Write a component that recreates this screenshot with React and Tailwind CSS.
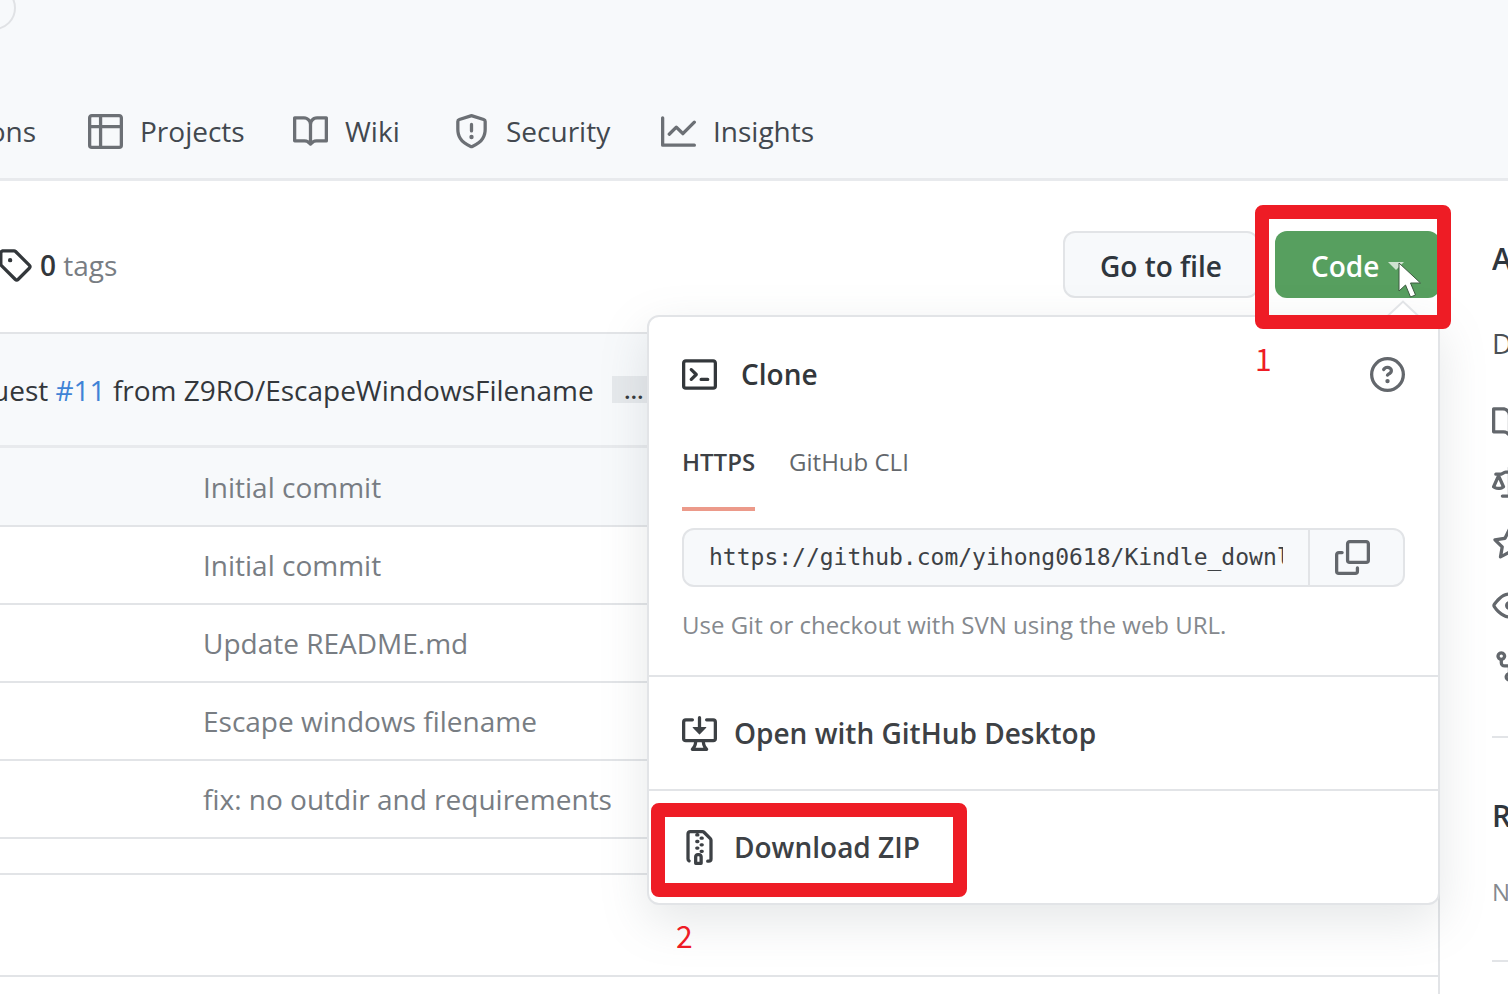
const ICONS = {
  table: "M0 1.75C0 .784.784 0 1.75 0h12.5C15.216 0 16 .784 16 1.75v12.5A1.75 1.75 0 0 1 14.25 16H1.75A1.75 1.75 0 0 1 0 14.25ZM6.5 6.5v8h7.75a.25.25 0 0 0 .25-.25V6.5Zm8-1.5V1.75a.25.25 0 0 0-.25-.25H6.5V5Zm-13 1.5v7.75c0 .138.112.25.25.25H5v-8ZM5 5V1.5H1.75a.25.25 0 0 0-.25.25V5Z",
  book: "M0 1.75A.75.75 0 0 1 .75 1h4.253c1.227 0 2.317.59 3 1.501A3.743 3.743 0 0 1 11.006 1h4.245a.75.75 0 0 1 .75.75v10.5a.75.75 0 0 1-.75.75h-4.507a2.25 2.25 0 0 0-1.591.659l-.622.621a.75.75 0 0 1-1.06 0l-.622-.621A2.25 2.25 0 0 0 5.258 13H.75a.75.75 0 0 1-.75-.75Zm7.251 10.324.004-5.073-.002-2.253A2.25 2.25 0 0 0 5.003 2.5H1.5v9h3.757a3.75 3.75 0 0 1 1.994.574ZM8.755 4.75l-.004 7.322a3.752 3.752 0 0 1 1.992-.572H14.5v-9h-3.495a2.25 2.25 0 0 0-2.25 2.25Z",
  shield: "M7.467.133a1.75 1.75 0 0 1 1.066 0l5.25 1.68A1.75 1.75 0 0 1 15 3.48V7c0 1.566-.32 3.182-1.303 4.682-.983 1.498-2.585 2.813-5.032 3.855a1.7 1.7 0 0 1-1.33 0c-2.447-1.042-4.049-2.357-5.032-3.855C1.32 10.182 1 8.566 1 7V3.48a1.75 1.75 0 0 1 1.217-1.667Zm.61 1.429a.25.25 0 0 0-.153 0l-5.25 1.68a.25.25 0 0 0-.174.238V7c0 1.358.275 2.666 1.057 3.86.784 1.194 2.121 2.34 4.366 3.297a.2.2 0 0 0 .154 0c2.245-.956 3.582-2.104 4.366-3.298C13.225 9.666 13.5 8.36 13.5 7V3.48a.25.25 0 0 0-.174-.237ZM9 10.5a1 1 0 1 1-2 0 1 1 0 0 1 2 0Zm-.25-5.75a.75.75 0 0 0-1.5 0v3a.75.75 0 0 0 1.5 0Z",
  graph: "M1.5 1.75V13.5h13.75a.75.75 0 0 1 0 1.5H.75a.75.75 0 0 1-.75-.75V1.75a.75.75 0 0 1 1.5 0Zm14.28 2.53-5.25 5.25a.75.75 0 0 1-1.06 0L7 7.06 4.28 9.78a.751.751 0 0 1-1.042-.018.751.751 0 0 1-.018-1.042l3.25-3.25a.75.75 0 0 1 1.06 0L10 7.94l4.72-4.72a.751.751 0 0 1 1.042.018.751.751 0 0 1 .018 1.042Z",
  tag: "M1 7.775V2.75C1 1.784 1.784 1 2.75 1h5.025c.464 0 .91.184 1.238.513l6.25 6.25a1.75 1.75 0 0 1 0 2.474l-5.026 5.026a1.75 1.75 0 0 1-2.474 0l-6.25-6.25A1.752 1.752 0 0 1 1 7.775Zm1.5 0c0 .066.026.13.073.177l6.25 6.25a.25.25 0 0 0 .354 0l5.025-5.025a.25.25 0 0 0 0-.354l-6.25-6.25a.25.25 0 0 0-.177-.073H2.75a.25.25 0 0 0-.25.25ZM6 5a1 1 0 1 1 0 2 1 1 0 0 1 0-2Z",
  terminal: "M0 2.75C0 1.784.784 1 1.75 1h12.5c.966 0 1.75.784 1.75 1.75v10.5A1.75 1.75 0 0 1 14.25 15H1.75A1.75 1.75 0 0 1 0 13.25Zm1.75-.25a.25.25 0 0 0-.25.25v10.5c0 .138.112.25.25.25h12.5a.25.25 0 0 0 .25-.25V2.75a.25.25 0 0 0-.25-.25ZM7.25 8a.749.749 0 0 1-.22.53l-2.25 2.25a.749.749 0 0 1-1.275-.326.749.749 0 0 1 .215-.734L5.44 8 3.72 6.28a.749.749 0 0 1 .326-1.275.749.749 0 0 1 .734.215l2.25 2.25c.141.14.22.331.22.53Zm1.5 1.5h3a.75.75 0 0 1 0 1.5h-3a.75.75 0 0 1 0-1.5Z",
  question: "M0 8a8 8 0 1 1 16 0A8 8 0 0 1 0 8Zm8-6.5a6.5 6.5 0 1 0 0 13 6.5 6.5 0 0 0 0-13ZM6.92 6.085h.001a.749.749 0 1 1-1.342-.67c.169-.339.436-.701.849-.977C6.845 4.16 7.369 4 8 4a2.756 2.756 0 0 1 1.637.525c.503.377.863.965.863 1.725 0 .448-.115.83-.329 1.15-.205.307-.47.513-.692.662-.109.072-.22.138-.313.195l-.006.004a6.24 6.24 0 0 0-.26.16.952.952 0 0 0-.276.245.75.75 0 0 1-1.248-.832c.184-.264.42-.489.692-.661.103-.067.207-.132.313-.195l.007-.004c.1-.061.182-.11.258-.161a.969.969 0 0 0 .277-.245C8.96 6.514 9 6.427 9 6.25a.612.612 0 0 0-.262-.525A1.27 1.27 0 0 0 8 5.5c-.369 0-.595.09-.74.187a1.01 1.01 0 0 0-.34.398ZM9 11a1 1 0 1 1-2 0 1 1 0 0 1 2 0Z",
  copy: "M0 6.75C0 5.784.784 5 1.75 5h1.5a.75.75 0 0 1 0 1.5h-1.5a.25.25 0 0 0-.25.25v7.5c0 .138.112.25.25.25h7.5a.25.25 0 0 0 .25-.25v-1.5a.75.75 0 0 1 1.5 0v1.5A1.75 1.75 0 0 1 9.25 16h-7.5A1.75 1.75 0 0 1 0 14.25ZM5 1.75C5 .784 5.784 0 6.75 0h7.5C15.216 0 16 .784 16 1.75v7.5A1.75 1.75 0 0 1 14.25 11h-7.5A1.75 1.75 0 0 1 5 9.25Zm1.75-.25a.25.25 0 0 0-.25.25v7.5c0 .138.112.25.25.25h7.5a.25.25 0 0 0 .25-.25v-7.5a.25.25 0 0 0-.25-.25Z",
  desktop: "m4.927 5.427 2.896 2.896a.25.25 0 0 0 .354 0l2.896-2.896A.25.25 0 0 0 10.896 5H8.75V.75a.75.75 0 1 0-1.5 0V5H5.104a.25.25 0 0 0-.177.427ZM1.573 2.573a.25.25 0 0 0-.073.177v7.5a.25.25 0 0 0 .25.25h12.5a.25.25 0 0 0 .25-.25v-7.5a.25.25 0 0 0-.25-.25h-3a.75.75 0 1 1 0-1.5h3A1.75 1.75 0 0 1 16 2.75v7.5A1.75 1.75 0 0 1 14.25 12h-3.727c.099 1.041.52 1.872 1.292 2.757A.752.752 0 0 1 11.25 16h-6.5a.75.75 0 0 1-.565-1.243c.772-.885 1.192-1.716 1.292-2.757H1.75A1.75 1.75 0 0 1 0 10.25v-7.5A1.75 1.75 0 0 1 1.75 1h3a.75.75 0 0 1 0 1.5h-3a.25.25 0 0 0-.177.073ZM6.982 12a5.72 5.72 0 0 1-.765 2.5h3.566a5.72 5.72 0 0 1-.765-2.5H6.982Z",
  zip: "M3.5 1.75v11.5c0 .09.048.173.126.217a.75.75 0 0 1-.752 1.298A1.748 1.748 0 0 1 2 13.25V1.75C2 .784 2.784 0 3.75 0h5.586c.464 0 .909.185 1.237.513l2.914 2.914c.329.328.513.773.513 1.237v8.586A1.75 1.75 0 0 1 12.25 15h-.5a.75.75 0 0 1 0-1.5h.5a.25.25 0 0 0 .25-.25V4.664a.25.25 0 0 0-.073-.177L9.513 1.573a.25.25 0 0 0-.177-.073H7.25a.75.75 0 0 1 0 1.5h-.5a.75.75 0 0 1 0-1.5h-3a.25.25 0 0 0-.25.25Zm3.75 8.75h.5c.966 0 1.75.784 1.75 1.75v3a.75.75 0 0 1-.75.75h-2.5a.75.75 0 0 1-.75-.75v-3c0-.966.784-1.75 1.75-1.75ZM6 5.25a.75.75 0 0 1 .75-.75h.5a.75.75 0 0 1 0 1.5h-.5A.75.75 0 0 1 6 5.25Zm.75 2.25h.5a.75.75 0 0 1 0 1.5h-.5a.75.75 0 0 1 0-1.5ZM8 6.75A.75.75 0 0 1 8.75 6h.5a.75.75 0 0 1 0 1.5h-.5A.75.75 0 0 1 8 6.75ZM8.75 3h.5a.75.75 0 0 1 0 1.5h-.5a.75.75 0 0 1 0-1.5ZM8 9.75A.75.75 0 0 1 8.75 9h.5a.75.75 0 0 1 0 1.5h-.5A.75.75 0 0 1 8 9.75Zm-1 2.5v2.25h1v-2.25a.25.25 0 0 0-.25-.25h-.5a.25.25 0 0 0-.25.25Z",
  law: "M8.75.75V2h.985c.304 0 .603.08.867.231l1.29.736c.038.022.08.033.124.033h2.234a.75.75 0 0 1 0 1.5h-.427l2.111 4.692a.75.75 0 0 1-.154.838c-.21.176-.441.327-.686.45C14.556 10.78 13.88 11 13 11a4.498 4.498 0 0 1-2.023-.454 3.544 3.544 0 0 1-.731-.49.75.75 0 0 1-.18-.864L12.178 4.5h-.162c-.305 0-.604-.079-.868-.231l-1.29-.736a.245.245 0 0 0-.124-.033H8.75V13h2.5a.75.75 0 0 1 0 1.5h-6.5a.75.75 0 0 1 0-1.5h2.5V3.5h-.984a.245.245 0 0 0-.124.033l-1.289.737c-.265.15-.564.23-.869.23h-.162l2.112 4.692a.75.75 0 0 1-.154.838c-.23.2-.48.37-.758.508C4.556 10.78 3.88 11 3 11a4.498 4.498 0 0 1-2.023-.454 3.544 3.544 0 0 1-.731-.49.75.75 0 0 1-.18-.864L2.178 4.5H1.75a.75.75 0 0 1 0-1.5h2.234a.249.249 0 0 0 .125-.033l1.288-.737c.265-.15.564-.23.869-.23h.984V.75a.75.75 0 0 1 1.5 0Zm2.945 8.477c.285.135.718.273 1.305.273s1.02-.138 1.305-.273L13 6.327Zm-10 0c.285.135.718.273 1.305.273s1.02-.138 1.305-.273L3 6.327Z",
  star: "M8 .25a.75.75 0 0 1 .673.418l1.882 3.815 4.21.612a.75.75 0 0 1 .416 1.279l-3.046 2.97.719 4.192a.751.751 0 0 1-1.088.791L8 12.347l-3.766 1.98a.75.75 0 0 1-1.088-.79l.72-4.194L.818 6.374a.75.75 0 0 1 .416-1.28l4.21-.611L7.327.668A.75.75 0 0 1 8 .25Zm0 2.445L6.615 5.5a.75.75 0 0 1-.564.41l-3.097.45 2.24 2.184a.75.75 0 0 1 .216.664l-.528 3.084 2.769-1.456a.75.75 0 0 1 .698 0l2.77 1.456-.53-3.084a.75.75 0 0 1 .216-.664l2.24-2.183-3.096-.45a.75.75 0 0 1-.564-.41L8 2.694Z",
  eye: "M8 2c1.981 0 3.671.992 4.933 2.078 1.27 1.091 2.187 2.345 2.637 3.023a1.62 1.62 0 0 1 0 1.798c-.45.678-1.367 1.932-2.637 3.023C11.67 13.008 9.981 14 8 14c-1.981 0-3.671-.992-4.933-2.078C1.797 10.83.88 9.576.43 8.898a1.62 1.62 0 0 1 0-1.798c.45-.677 1.367-1.931 2.637-3.022C4.33 2.992 6.019 2 8 2ZM1.679 7.932a.12.12 0 0 0 0 .136c.411.622 1.241 1.75 2.366 2.717C5.176 11.758 6.527 12.5 8 12.5c1.473 0 2.825-.742 3.955-1.715 1.124-.967 1.954-2.096 2.366-2.717a.12.12 0 0 0 0-.136c-.412-.621-1.242-1.75-2.366-2.717C10.824 4.242 9.473 3.5 8 3.5c-1.473 0-2.825.742-3.955 1.715-1.124.967-1.954 2.096-2.366 2.717ZM8 10a2 2 0 1 1-.001-3.999A2 2 0 0 1 8 10Z",
  fork: "M5 5.372v.878c0 .414.336.75.75.75h4.5a.75.75 0 0 0 .75-.75v-.878a2.25 2.25 0 1 1 1.5 0v.878a2.25 2.25 0 0 1-2.25 2.25h-1.5v2.128a2.251 2.251 0 1 1-1.5 0V8.5h-1.5A2.25 2.25 0 0 1 3.5 6.25v-.878a2.25 2.25 0 1 1 1.5 0ZM5 3.25a.75.75 0 1 0-1.5 0 .75.75 0 0 0 1.5 0Zm6.75.75a.75.75 0 1 0 0-1.5.75.75 0 0 0 0 1.5Zm-3 8.75a.75.75 0 1 0-1.5 0 .75.75 0 0 0 1.5 0Z",
};

function Icon({ name, className = "" }) {
  return (
    <svg viewBox="0 0 16 16" aria-hidden="true" className={`size-[35px] shrink-0 fill-current ${className}`}>
      <path fillRule="evenodd" d={ICONS[name]} />
    </svg>
  );
}

const TABS = [
  { icon: "table", label: "Projects", width: "w-[205px]" },
  { icon: "book", label: "Wiki", width: "w-[161px]" },
  { icon: "shield", label: "Security", width: "w-[207px]" },
  { icon: "graph", label: "Insights", width: "w-[160px]" },
];

const COMMITS = [
  "Initial commit",
  "Initial commit",
  "Update README.md",
  "Escape windows filename",
  "fix: no outdir and requirements",
];

function Header() {
  return (
    <header className="h-[181px] border-b-[3px] border-[#e8eaed] bg-[#f7f9fb]">
      <div className="flex h-[86px] items-start overflow-hidden">
        <div className="-ml-7 -mt-3.5 size-[44px] rounded-full border-2 border-[#e0e2e5]" />
      </div>
      <nav aria-label="Repository" className="flex h-[90px] items-center text-[28px] text-[#42484f]">
        <a href="#actions" className="mr-[52px] flex w-[36px] justify-end overflow-hidden">ons</a>
        {TABS.map((t) => (
          <a key={t.label} href={`#${t.label}`} className={`flex items-center gap-[17px] whitespace-nowrap ${t.width}`}>
            <Icon name={t.icon} className="text-[#6c7075]" />
            {t.label}
          </a>
        ))}
      </nav>
    </header>
  );
}

function ClonePanel() {
  return (
    <section
      aria-label="Clone"
      className="absolute right-0 top-[84px] z-10 w-[793px] rounded-xl border-2 border-[#e2e4e7] bg-white shadow-[0_16px_48px_rgba(110,120,130,0.18)]"
    >
      <svg viewBox="0 0 36 18" aria-hidden="true" className="absolute -top-[17px] right-[17px] h-[18px] w-9">
        <path d="M1 17.500 18 1.500 35 17.500" fill="#fff" stroke="#e2e4e7" strokeWidth="2" />
      </svg>
      <div className="px-[33px]">
        <div className="flex h-[114px] items-center justify-between">
          <h2 className="flex items-center gap-[24px] text-[28px] font-semibold text-[#33373b]">
            <Icon name="terminal" />
            Clone
          </h2>
          <a href="#help" aria-label="Which remote URL should I use?" className="text-[#63676c]">
            <Icon name="question" />
          </a>
        </div>
        <div role="tablist" className="flex h-[80px] gap-[34px] text-[24px] leading-8">
          <button type="button" role="tab" aria-selected="true" className="flex flex-col border-b-4 border-[#ec9a8a] pt-[15px] font-semibold text-[#3d4145]">
            HTTPS
          </button>
          <button type="button" role="tab" aria-selected="false" className="flex flex-col pt-[15px] text-[#63676c]">
            GitHub CLI
          </button>
        </div>
        <div className="mt-[17px] flex h-[59px] rounded-xl border-2 border-[#e2e4e7] bg-[#f7f9fb]">
          <div className="flex flex-1 items-center px-[25px]">
            <input
              aria-label="Clone URL"
              readOnly
              defaultValue="https://github.com/yihong0618/Kindle_download_helper.git"
              className="w-full bg-transparent font-['DejaVu_Sans_Mono',monospace] text-[23px] text-[#3d4145] outline-none"
            />
          </div>
          <button type="button" aria-label="Copy" className="flex w-[95px] items-center justify-center border-l-2 border-[#e2e4e7] pr-2 text-[#63676c]">
            <Icon name="copy" />
          </button>
        </div>
        <p className="flex h-[88px] items-center pb-3 text-[24px] text-[#85898e]">
          Use Git or checkout with SVN using the web URL.
        </p>
      </div>
      <a href="#desktop" className="flex h-[114px] items-center gap-[17px] border-t-2 border-[#e2e4e7] px-[33px] text-[28px] font-semibold text-[#3d4145]">
        <Icon name="desktop" />
        Open with GitHub Desktop
      </a>
      <div className="relative border-t-2 border-[#e2e4e7]">
        <a href="#zip" className="flex h-[112px] items-center gap-[17px] px-[33px] text-[28px] font-semibold text-[#3d4145]">
          <Icon name="zip" />
          Download ZIP
        </a>
        <div className="absolute left-[2px] top-[12px] h-[94px] w-[316px] rounded-lg border-[14px] border-[#ee1c25]" />
        <span className="absolute left-[27px] top-[124px] font-['Noto_Sans_CJK_SC',sans-serif] text-[30px] leading-10 text-[#ee1c25]">2</span>
      </div>
    </section>
  );
}

function Toolbar() {
  return (
    <div className="flex h-[151px] items-start justify-between pt-[50px] text-[28px]">
      <a href="#tags" className="flex h-[67px] items-center gap-2 text-[#787d83]">
        <Icon name="tag" className="-ml-[3px] text-[#33373b]" />
        <span><b className="font-semibold text-[#33373b]">0</b> tags</span>
      </a>
      <div className="flex gap-[16px]">
        <button type="button" className="h-[67px] w-[196px] rounded-xl border-2 border-[#e2e4e7] bg-[#f7f9fb] pt-[2px] font-semibold text-[#2f363d]">
          Go to file
        </button>
        <div className="relative">
          <button type="button" aria-expanded="true" className="flex h-[67px] w-[165px] items-center gap-[9px] rounded-xl bg-[#579f5f] pl-[36px] pt-[2px] font-semibold text-white">
            Code
            <svg viewBox="0 0 16 8" aria-hidden="true" className="h-2 w-4 fill-[#cfe3d1]"><path d="M0 0h16L8 8Z" /></svg>
          </button>
          <ClonePanel />
          <div className="absolute -left-[20px] -top-[26px] z-20 h-[124px] w-[196px] rounded-lg border-[14px] border-[#ee1c25]" />
          <span className="absolute -left-[20px] top-[107px] z-20 font-['Noto_Sans_CJK_SC',sans-serif] text-[30px] leading-10 text-[#ee1c25]">1</span>
          <svg viewBox="0 0 24 38" aria-hidden="true" className="absolute left-[123px] top-[31px] z-20 h-[38px] w-6">
            <path d="M1 1v28l6.500-6 5 12 5-2-5-12h10Z" fill="#fff" stroke="#3c5a40" strokeWidth="1" />
          </svg>
        </div>
      </div>
    </div>
  );
}

function Files() {
  return (
    <div className="border-r-2 border-t-2 border-[#e2e4e7]">
      <div className="flex h-[114px] items-center border-b-[3px] border-[#e8eaed] bg-[#f7f9fb] text-[28px] text-[#33373b]">
        <p className="-ml-2 whitespace-nowrap">
          uest <a href="#11" className="text-[#3f83d6]">#11</a> from Z9RO/EscapeWindowsFilename
        </p>
        <button type="button" className="ml-[18px] flex h-[27px] w-[44px] items-center justify-center bg-[#e6e9ec] text-[24px] font-semibold">…</button>
      </div>
      <table className="w-full text-left text-[28px] text-[#787d83]">
        <tbody>
          {COMMITS.map((c, i) => (
            <tr key={i} className="h-[78px] border-b-2 border-[#e2e4e7] first:bg-[#f7f9fb]">
              <td className="pl-[203px]">{c}</td>
            </tr>
          ))}
        </tbody>
      </table>
      <div className="h-9 border-b-2 border-[#e2e4e7]" />
      <div className="h-[102px] border-b-2 border-[#e2e4e7]" />
      <div className="h-10" />
    </div>
  );
}

function Sidebar() {
  return (
    <aside className="w-4 shrink-0 overflow-hidden whitespace-nowrap pt-[54px] text-[28px] leading-[48px] text-[#4a4f55]">
      <h2 className="text-[30px] font-semibold text-[#2f363d]">A</h2>
      <p className="mt-[36px]">D</p>
      <ul className="mt-[38px] flex flex-col gap-[26px] text-[#63676c]">
        {["book", "law", "star", "eye", "fork"].map((n) => (
          <li key={n}><Icon name={n} /></li>
        ))}
      </ul>
      <hr className="mt-[52px] border-t-2 border-[#e2e4e7]" />
      <h2 className="mt-[54px] text-[30px] font-semibold text-[#2f363d]">R</h2>
      <p className="mt-[28px] text-[24px] text-[#85898e]">N</p>
      <hr className="mt-[44px] border-t-2 border-[#e2e4e7]" />
    </aside>
  );
}

export default function App() {
  return (
    <div className="h-screen overflow-hidden bg-white font-['Open_Sans','Noto_Sans',sans-serif]">
      <Header />
      <main className="flex">
        <div className="mr-[52px] min-w-0 flex-1">
          <Toolbar />
          <Files />
        </div>
        <Sidebar />
      </main>
    </div>
  );
}
